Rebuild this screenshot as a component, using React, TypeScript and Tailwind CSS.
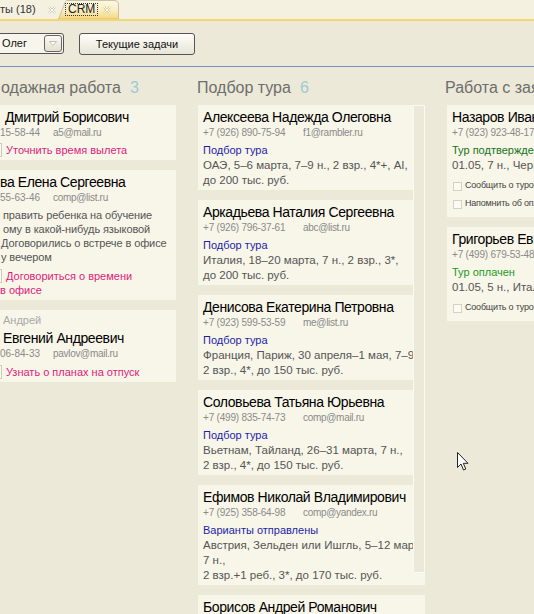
import React from 'react';

const ClipCheck = () => (
  <div className="w-[2px] h-[14px] border-r border-y border-[#cfcbb8] bg-[#fbfaf3] shrink-0" />
);

function Chk({ text }: { text: string }) {
  return (
    <div className="flex items-center h-[18px] pl-[1px] whitespace-nowrap">
      <div className="w-[9px] h-[9px] border border-[#d6d2c0] bg-[#fbfaf4] shrink-0" />
      <span className="ml-[3px] text-[9px] text-[#444] tracking-[-0.2px]">{text}</span>
    </div>
  );
}

function TourCard({
  name,
  phone,
  email,
  status,
  statusColor,
  lines,
  checks = [],
}: {
  name: string;
  phone: string;
  email?: string;
  status: string;
  statusColor: string;
  lines: string[];
  checks?: string[];
}) {
  return (
    <div className="bg-[#f8f6e9] pt-[3px] pb-[2px] pl-[5px] overflow-hidden">
      <div className="text-[14px] tracking-[-0.4px] leading-[19px] text-black whitespace-nowrap">{name}</div>
      <div className="flex text-[10px] leading-[12px] text-[#8a8a8a] whitespace-nowrap">
        <span className="w-[100px] shrink-0 tracking-[-0.2px]">{phone}</span>
        {email && <span className="tracking-[-0.3px]">{email}</span>}
      </div>
      <div className={`mt-[3px] text-[11px] leading-[16px] whitespace-nowrap ${statusColor}`}>{status}</div>
      {lines.map((l, i) => (
        <div key={i} className="text-[11.5px] leading-[15px] text-[#555] whitespace-nowrap">
          {l}
        </div>
      ))}
      {checks.length > 0 && (
        <div className="mt-[4px] pb-[2px]">
          {checks.map((c, i) => (
            <Chk key={i} text={c} />
          ))}
        </div>
      )}
    </div>
  );
}

function ColHeader({ title, count, className = '' }: { title: string; count?: string; className?: string }) {
  return (
    <div className={`text-[16px] leading-[20px] text-[#6e6e6e] whitespace-nowrap ${className}`}>
      {title}
      {count && <span className="ml-[9px] text-[#9fcad6]">{count}</span>}
    </div>
  );
}

function ShortContact({ phone, email }: { phone: string; email: string }) {
  return (
    <div className="flex text-[10px] leading-[12px] text-[#8a8a8a] whitespace-nowrap">
      <span className="w-[53px]">{phone}</span>
      <span className="tracking-[-0.3px]">{email}</span>
    </div>
  );
}

export default function App() {
  return (
    <div className="relative w-[534px] h-[614px] overflow-hidden bg-[#ece9d8] [font-family:'Liberation_Sans',Arial,sans-serif]">
      {/* Tabs */}
      <div className="h-[19px] bg-[#f4f1e1] flex">
        <div className="w-[58px] h-full flex items-center text-[11px] text-[#333] whitespace-nowrap">
          <span>ты (18)</span>
          <svg width="8" height="8" viewBox="0 0 8 8" className="ml-[12px]">
            <path d="M1 1 L7 7 M7 1 L1 7" stroke="#cfcab5" strokeWidth="2" />
            <path d="M1 1 L7 7 M7 1 L1 7" stroke="#ffffff" strokeWidth="1" />
          </svg>
        </div>
        <div className="relative w-[61px] h-full">
          <svg width="61" height="19" className="absolute inset-0">
            <defs>
              <linearGradient id="tabg" x1="0" y1="0" x2="0" y2="1">
                <stop offset="0" stopColor="#fbf8e6" />
                <stop offset="0.55" stopColor="#f9edc0" />
                <stop offset="1" stopColor="#f6d679" />
              </linearGradient>
            </defs>
            <path d="M0.5 19 L7.5 1.5 Q8 0.5 9 0.5 L56 0.5 Q60.5 0.5 60.5 5 L60.5 19 Z" fill="url(#tabg)" stroke="#c9c1a0" />
          </svg>
          <div className="relative flex items-center h-full pl-[7px]">
            <span className="border border-dotted border-[#333] px-[2px] h-[13px] leading-[11px] text-[12px] text-[#222]">CRM</span>
            <svg width="8" height="8" viewBox="0 0 8 8" className="ml-[5px]">
              <path d="M1 1 L7 7 M7 1 L1 7" stroke="#d8c88a" strokeWidth="2" />
              <path d="M1 1 L7 7 M7 1 L1 7" stroke="#ffffff" strokeWidth="1" />
            </svg>
          </div>
        </div>
      </div>
      <div className="h-[2px] bg-[#f7d56e]" />

      {/* Toolbar */}
      <div className="h-[45px] flex items-center">
        <div className="-ml-[4px] w-[68px] h-[21px] border border-[#555] rounded-[3px] bg-[#f7f5ec] flex items-center justify-between pl-[5px] pr-[1px]">
          <span className="text-[11px] text-[#111]">Олег</span>
          <div className="w-[18px] h-[17px] border border-[#666] rounded-[3px] bg-gradient-to-b from-[#fbfaf4] to-[#e3e0d0] flex items-center justify-center">
            <svg width="8" height="5" viewBox="0 0 8 5">
              <path d="M0.5 0.5 L7.5 0.5 L4 4.5 Z" fill="#ffffff" stroke="#b8b4a2" strokeWidth="0.8" />
            </svg>
          </div>
        </div>
        <button className="ml-[15px] w-[116px] h-[22px] border border-[#555] rounded-[3px] bg-gradient-to-b from-[#fefdf9] to-[#e8e5d7] text-[11px] text-[#111] leading-[20px]">
          Текущие задачи
        </button>
      </div>
      <div className="h-px bg-[#7190c6]" />

      {/* Board */}
      <div className="flex pt-[11px]">
        {/* Column 1 */}
        <div className="w-[176px] shrink-0">
          <ColHeader title="одажная работа" count="3" className="pl-[1px]" />
          <div className="mt-[7px] flex flex-col gap-[10px]">
            <div className="bg-[#f8f6e9] pt-[3px] pb-[2px]">
              <div className="pl-[5px] text-[14px] tracking-[-0.4px] leading-[19px] text-black whitespace-nowrap">Дмитрий Борисович</div>
              <ShortContact phone="15-58-44" email="a5@mail.ru" />
              <div className="mt-[4px] flex items-center h-[14px] mb-[1px]">
                <ClipCheck />
                <span className="pl-[4px] text-[11px] leading-[14px] text-[#e01b7c] whitespace-nowrap">Уточнить время вылета</span>
              </div>
            </div>

            <div className="bg-[#f8f6e9] pt-[3px] pb-[3px]">
              <div className="text-[14px] tracking-[-0.4px] leading-[19px] text-black whitespace-nowrap">ва Елена Сергеевна</div>
              <ShortContact phone="55-63-46" email="comp@list.ru" />
              <div className="mt-[4px] text-[11px] leading-[14px] text-[#555] whitespace-nowrap tracking-[-0.1px]">
                <div className="pl-[3px]">править ребенка на обучение</div>
                <div className="pl-[3px]">ому в какой-нибудь языковой</div>
                <div className="pl-[1px]">Договорились о встрече в офисе</div>
                <div className="pl-[1px]">у вечером</div>
              </div>
              <div className="mt-[5px] text-[11px] leading-[14px] text-[#e01b7c] whitespace-nowrap">
                <div className="flex items-center">
                  <ClipCheck />
                  <span className="pl-[4px]">Договориться о времени</span>
                </div>
                <div>в офисе</div>
              </div>
            </div>

            <div className="bg-[#f8f6e9] pt-[3px] pb-[3px]">
              <div className="pl-[3px] text-[11px] leading-[14px] text-[#a9a9a9]">Андрей</div>
              <div className="mt-[2px] pl-[3px] text-[14px] tracking-[-0.4px] leading-[19px] text-black whitespace-nowrap">Евгений Андреевич</div>
              <ShortContact phone="06-84-33" email="pavlov@mail.ru" />
              <div className="mt-[5px] flex items-center">
                <ClipCheck />
                <span className="pl-[4px] text-[11px] leading-[14px] text-[#e01b7c] whitespace-nowrap">Узнать о планах на отпуск</span>
              </div>
            </div>
          </div>
        </div>

        {/* Column 2 */}
        <div className="ml-[22px] w-[227px] shrink-0 relative">
          <ColHeader title="Подбор тура" count="6" className="-ml-[1px]" />
          <div className="mt-[7px] flex flex-col gap-[10px]">
            <TourCard
              name="Алексеева Надежда Олеговна"
              phone="+7 (926) 890-75-94"
              email="f1@rambler.ru"
              status="Подбор тура"
              statusColor="text-[#1e1eaa]"
              lines={['ОАЭ, 5–6 марта, 7–9 н., 2 взр., 4*+, AI,', 'до 200 тыс. руб.']}
            />
            <TourCard
              name="Аркадьева Наталия Сергеевна"
              phone="+7 (926) 796-37-61"
              email="abc@list.ru"
              status="Подбор тура"
              statusColor="text-[#1e1eaa]"
              lines={['Италия, 18–20 марта, 7 н., 2 взр., 3*,', 'до 200 тыс. руб.']}
            />
            <TourCard
              name="Денисова Екатерина Петровна"
              phone="+7 (923) 599-53-59"
              email="me@list.ru"
              status="Подбор тура"
              statusColor="text-[#1e1eaa]"
              lines={['Франция, Париж, 30 апреля–1 мая, 7–9 н.,', '2 взр., 4*, до 150 тыс. руб.']}
            />
            <TourCard
              name="Соловьева Татьяна Юрьевна"
              phone="+7 (499) 835-74-73"
              email="comp@mail.ru"
              status="Подбор тура"
              statusColor="text-[#1e1eaa]"
              lines={['Вьетнам, Тайланд, 26–31 марта, 7 н.,', '2 взр., 4*, до 150 тыс. руб.']}
            />
            <TourCard
              name="Ефимов Николай Владимирович"
              phone="+7 (925) 358-64-98"
              email="comp@yandex.ru"
              status="Варианты отправлены"
              statusColor="text-[#1e1eaa]"
              lines={['Австрия, Зельден или Ишгль, 5–12 марта,', '7 н.,', '2 взр.+1 реб., 3*, до 170 тыс. руб.']}
            />
            <TourCard
              name="Борисов Андрей Романович"
              phone="+7 (916) 244-18-30"
              email="borisov@mail.ru"
              status="Подбор тура"
              statusColor="text-[#1e1eaa]"
              lines={['Греция, Крит, 1–10 мая, 9 н.,', '2 взр., 4*, до 180 тыс. руб.']}
            />
          </div>
          {/* scroll thumb */}
          <div className="absolute right-0 top-[27px] w-[12px] h-[468px] border border-[#fbfaf2] bg-[#ece9d8]" />
        </div>

        {/* Column 3 */}
        <div className="ml-[20px] w-[120px] shrink-0">
          <ColHeader title="Работа с заявками" />
          <div className="mt-[7px] ml-[2px] w-[200px] flex flex-col gap-[10px]">
            <TourCard
              name="Назаров Иван Петрович"
              phone="+7 (923) 923-48-17"
              status="Тур подтвержден"
              statusColor="text-[#177317]"
              lines={['01.05, 7 н., Черногория']}
              checks={['Сообщить о туроператоре', 'Напомнить об оплате']}
            />
            <TourCard
              name="Григорьев Евгений"
              phone="+7 (499) 679-53-48"
              status="Тур оплачен"
              statusColor="text-[#1a9c1a]"
              lines={['01.05, 5 н., Италия']}
              checks={['Сообщить о туроператоре']}
            />
          </div>
        </div>
      </div>

      {/* mouse cursor */}
      <svg width="13" height="20" viewBox="0 0 13 20" className="absolute left-[457px] top-[452px]">
        <path d="M0.5 0.5 L0.5 15.5 L4 12 L6.5 18 L8.8 17 L6.3 11.3 L11 11.3 Z" fill="#ffffff" stroke="#222" strokeWidth="1" />
      </svg>
    </div>
  );
}
